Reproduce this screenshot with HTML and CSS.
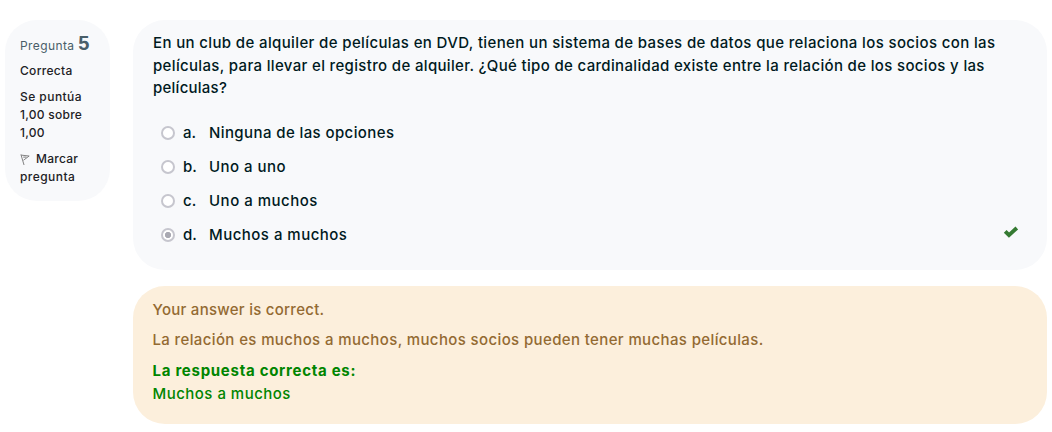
FILE: index.html
```html
<!DOCTYPE html>
<html lang="es">
<head>
<meta charset="utf-8">
<title>Pregunta 5</title>
<link rel="stylesheet" href="styles.css">
</head>
<body>
<div class="question">
  <aside class="info">
    <h3 class="number">Pregunta <span class="qno">5</span></h3>
    <div class="state">Correcta</div>
    <div class="grade">Se puntúa<br><span class="score">1,00 sobre<br>1,00</span></div>
    <div class="flag"><svg class="flag-icon" viewBox="0 0 12 14"><path d="M1 1.5 4.4 13M1.2 2.2 10 3.2 3.8 7.8M3.5 4.4 7 4.4" fill="none" stroke="#777" stroke-width="1"/></svg><span class="flag-text">Marcar</span><br>pregunta</div>
  </aside>
  <main class="content">
    <section class="formulation">
      <p class="qtext"><span class="l1">En un club de alquiler de películas en DVD, tienen un sistema de bases de datos que relaciona los socios con las</span><br><span class="l2">películas, para llevar el registro de alquiler. ¿Qué tipo de cardinalidad existe entre la relación de los socios y las</span><br><span class="l3">películas?</span></p>
      <div class="answers">
        <div class="option"><span class="radio"></span><span class="letter">a.</span><span class="oa">Ninguna de las opciones</span></div>
        <div class="option"><span class="radio"></span><span class="letter">b.</span><span class="ob">Uno a uno</span></div>
        <div class="option"><span class="radio"></span><span class="letter">c.</span><span class="oc">Uno a muchos</span></div>
        <div class="option"><span class="radio checked"></span><span class="letter">d.</span><span class="od">Muchos a muchos</span><svg class="check" viewBox="0 0 16 12"><path d="M2.2 5.3 6 9.1 13.8 2" fill="none" stroke="#357a32" stroke-width="3.9"/></svg></div>
      </div>
    </section>
    <section class="outcome">
      <p class="feedback f1">Your answer is correct.</p>
      <p class="feedback f2">La relación es muchos a muchos, muchos socios pueden tener muchas películas.</p>
      <p class="right"><strong class="r1">La respuesta correcta es:</strong><br><span class="od">Muchos a muchos</span></p>
    </section>
  </main>
</div>
</body>
</html>
```
FILE: styles.css
```css
* { box-sizing: border-box; }
body { margin: 0; background: #fff; color: #001a1e; font: 500 15px/22.5px Inter, "Open Sans", sans-serif; white-space: nowrap; }
p, h3 { margin: 0; }
.question { display: flex; align-items: flex-start; gap: 23px; padding: 20px 5px 0; }
.info { width: 105px; height: 181px; padding: 15px 15px 14px; border-radius: 32px; background: #f8f9fb; color: #1d2125; font-size: 12px; line-height: 18px; letter-spacing: 0.45px; }
.number { height: 20px; margin-bottom: 7px; color: #495e69; font-size: 12px; font-weight: 400; line-height: 20px; letter-spacing: 0.4px; }
.qno { font-family: "Liberation Sans", sans-serif; font-size: 20px; font-weight: 700; line-height: 16px; letter-spacing: 0; }
.state { margin-bottom: 8px; letter-spacing: 0.3px; }
.grade { margin-bottom: 8px; }
.score { letter-spacing: 0.26px; }
.flag-text { letter-spacing: 0.26px; }
.flag-icon { width: 11px; height: 13px; margin-right: 5px; vertical-align: -3px; }
.content { flex: 1; }
.formulation { height: 250px; padding: 12px 19px 0 20px; margin-bottom: 16px; border-radius: 32px; background: #f8f9fb; }
.l1 { letter-spacing: 0.366px; }
.l2 { letter-spacing: 0.339px; }
.l3 { letter-spacing: 0.25px; }
.oa { letter-spacing: 0.4px; }
.ob { letter-spacing: 0.47px; }
.oc { letter-spacing: 0.5px; }
.od { letter-spacing: 0.48px; }
.answers { display: flex; flex-direction: column; padding: 17px 0 0 8px; }
.option { display: flex; align-items: center; height: 34px; }
.radio { width: 14px; height: 14px; margin: -2px 8px 0 0; border: 2px solid #c6c6ce; border-radius: 50%; background: #fff; }
.checked { background: radial-gradient(circle, #a9a9b2 0 2.8px, #fff 3.4px); }
.letter { width: 26px; }
.check { width: 16px; height: 12px; margin: -7px 9px 0 auto; }
.outcome { height: 138px; padding: 13px 19.5px; border-radius: 32px; background: #fcefdc; color: #936a32; }
.feedback { margin-bottom: 7.5px; }
.f1 { letter-spacing: 0.27px; }
.f2 { letter-spacing: 0.375px; }
.right { color: #008500; line-height: 23px; }
.r1 { font-weight: 700; letter-spacing: 0.72px; }
```
